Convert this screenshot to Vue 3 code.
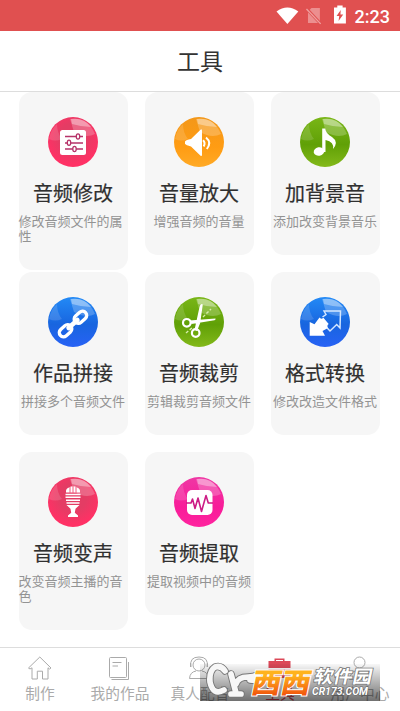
<script setup>
const tools = [
  { icon: 'sliders', tone: 'red', title: '音频修改', desc: '修改音频文件的属性' },
  { icon: 'speaker', tone: 'amber', title: '音量放大', desc: '增强音频的音量' },
  { icon: 'note', tone: 'green', title: '加背景音', desc: '添加改变背景音乐' },
  { icon: 'link', tone: 'blue', title: '作品拼接', desc: '拼接多个音频文件' },
  { icon: 'scissors', tone: 'green', title: '音频裁剪', desc: '剪辑裁剪音频文件' },
  { icon: 'convert', tone: 'blue', title: '格式转换', desc: '修改改造文件格式' },
  { icon: 'mic', tone: 'red', title: '音频变声', desc: '改变音频主播的音色' },
  { icon: 'wave', tone: 'pink', title: '音频提取', desc: '提取视频中的音频' }
]
const tabs = [
  { icon: 'home', label: '制作' },
  { icon: 'works', label: '我的作品' },
  { icon: 'voice', label: '真人配音' },
  { icon: 'tools', label: '工具', active: true },
  { icon: 'user', label: '用户中心' }
]
</script>

<template>
  <div class="screen">
    <div class="status">
      <svg class="wifi" viewBox="0 0 24 18"><path d="M0.5 4.2Q12-4 23.5 4.2L12 17.5Z" fill="#fff" /></svg>
      <svg class="sim" viewBox="0 0 16 18"><path d="M5.5 1H14V16H2V4.5Z" fill="#ec8f8f" /><path d="M0 1L15 17" stroke="#e05050" stroke-width="3" /><path d="M0.5 2L14.8 17" stroke="#efa09f" stroke-width="1.3" /></svg>
      <svg class="battery" viewBox="0 0 12 19"><path d="M0 2.5H3.3V0.3H8.7V2.5H12V18.5H0Z" fill="#fff" /><path d="M6.8 5L2.6 11H5.3L4.6 16L9.3 9.5H6.5Z" fill="#e05050" /></svg>
      <span class="time">2:23</span>
    </div>
    <header class="header">工具</header>
    <main class="grid">
      <section v-for="tool in tools" :key="tool.title" class="card">
        <div class="orb" :class="tool.tone">
          <svg viewBox="0 0 50 50" fill="none">
            <path d="M22 2Q40 0 47 17Q38 22 26 15Z" fill="#fff" opacity=".22" />
            <path d="M23 2Q36 0 43 10Q34 10 24 7Z" fill="#fff" opacity=".35" />
            <path d="M1 22Q3 12 9 7Q9 16 14 22Q7 25 1 22Z" fill="#fff" opacity=".14" />
            <g v-if="tool.icon === 'sliders'">
              <rect x="12" y="13" width="26" height="25" rx="2.5" fill="#fff" />
              <path d="M17 19.5H35M17 26H35M17 32H35" stroke="#b63369" stroke-width="1.5" />
              <g fill="#fff" stroke="#b63369" stroke-width="1.3"><ellipse cx="30" cy="19.5" rx="1.7" ry="2.6" /><ellipse cx="21" cy="25.8" rx="1.7" ry="2.6" /><ellipse cx="26.5" cy="32" rx="1.7" ry="2.6" /></g>
            </g>
            <g v-else-if="tool.icon === 'speaker'">
              <path d="M11 24.5Q12 22.7 17 22L26.5 12.7Q28 11.5 28 14V37.5Q28 40 26.3 38.5L17 29.5Q12 28.3 11 26.8Z" fill="#fff" />
              <path d="M29 23.3Q31.7 25.6 29.7 29.5M32 20.5Q38 25.5 32.8 32" stroke="#fff" stroke-width="2" />
            </g>
            <g v-else-if="tool.icon === 'note'">
              <ellipse cx="19" cy="34.5" rx="5.3" ry="4.2" fill="#fff" transform="rotate(-10 19 34.5)" />
              <path d="M22.2 11.5H25.2Q26 17 32 20Q39 25 33 32Q34.5 25 25.5 23V35H22.2Z" fill="#fff" />
            </g>
            <g v-else-if="tool.icon === 'link'" transform="rotate(-42 25 27)" stroke="#fff">
              <rect x="8" y="22.8" width="14" height="8.4" rx="4.2" stroke-width="3.3" />
              <rect x="28" y="22.8" width="14" height="8.4" rx="4.2" stroke-width="3.3" />
              <path d="M19 27H31" stroke-width="4.5" stroke-linecap="round" />
            </g>
            <g v-else-if="tool.icon === 'scissors'">
              <circle cx="12.8" cy="25.8" r="3.8" stroke="#fff" stroke-width="2.2" />
              <circle cx="21.7" cy="36" r="3.8" stroke="#fff" stroke-width="2.2" />
              <path d="M15.5 23.5L41.5 21.5Q42 22.7 40.5 23.3L17.5 27ZM20.5 33L25.5 10Q26.5 6 28.8 7.5L26.2 26L23 34Z" fill="#fff" />
              <path d="M12 36L19 30M29 20L37 12" stroke="#d7edaa" stroke-width="1.4" stroke-dasharray="3 1.8" />
            </g>
            <g v-else-if="tool.icon === 'convert'">
              <path d="M22.5 20L26 17.5L24 14H40.5L40 31L36.7 27.5L30 34L27.2 31" stroke="#d5e7ff" stroke-width="1.5" />
              <path d="M9.7 25L14.5 27.2L19.5 20.6Q21 22.8 23.4 20.7L28.7 27Q26.5 28.3 28 31L22.5 34L25 38.7H9.7Z" fill="#fff" />
            </g>
            <g v-else-if="tool.icon === 'mic'">
              <path d="M18 15.5Q17.5 11.5 21 10.5Q25 7.8 29 10.5Q32.5 11.5 32 15.5Z" fill="#fff" />
              <path d="M22 10V16M25 9V16M28 10V16" stroke="#f25b7f" stroke-width="1" />
              <path d="M17.5 17.4H32.5M17.5 20.3H32.5M18 23.2H32M18.5 26H31.5" stroke="#fff" stroke-width="1.5" />
              <path d="M18.5 28H31.5L27.5 31.7L26.8 35.8L30 38.5V40H20V38.5L23.2 35.8L22.5 31.7Z" fill="#fff" />
            </g>
            <g v-else>
              <rect x="13" y="13" width="25.5" height="25" rx="5" fill="#fff" />
              <path d="M12 26H17L18.5 22L21 31.5L24 21L27.5 34.5L32 18.5L34.3 26H39" stroke="#cc1c85" stroke-width="1.6" stroke-linejoin="round" />
            </g>
          </svg>
        </div>
        <h2>{{ tool.title }}</h2>
        <p>{{ tool.desc }}</p>
      </section>
    </main>
    <nav class="tabs">
      <div v-for="tab in tabs" :key="tab.label" class="tab" :class="{ active: tab.active }">
        <svg viewBox="0 0 28 28" fill="none" stroke="currentColor" stroke-width="1">
          <path v-if="tab.icon === 'home'" d="M2.5 14L13.8 3L25 14L23.5 15L22 13.8V25H16.5V17.2H11.3V25H6V13.8L4 15Z" />
          <g v-else-if="tab.icon === 'works'"><rect x="3.5" y="3.5" width="17" height="20" rx="1" /><path d="M6.5 8.5H15.5M6.5 12H12M22.5 8V25.5H5.5" /></g>
          <g v-else-if="tab.icon === 'voice'"><circle cx="13" cy="11" r="6" /><path d="M5 13Q3 3 13 3Q23 3 21 13M4.5 9V13M21.5 9V13M3.5 24.5Q4 18 10 17M22.5 24.5Q22 18 16 17M3.5 24.5H22.5" /></g>
          <g v-else-if="tab.icon === 'tools'" fill="currentColor" stroke="none"><path d="M8.5 7V4.5H18.5V7H24.5V14H2.5V7ZM10 7H17V6H10Z" fill-rule="evenodd" /><path d="M2.5 15.5H24.5V24H2.5Z" /></g>
          <g v-else><circle cx="13.5" cy="8.5" r="5.5" /><path d="M3.5 25.5Q4.5 16 14 16Q23.5 16 24.5 25.5Z" /></g>
        </svg>
        <span>{{ tab.label }}</span>
      </div>
    </nav>
    <svg class="brand" viewBox="0 0 190 45">
      <defs>
        <linearGradient id="shade" x2="0" y2="1"><stop stop-color="#000" stop-opacity=".03" /><stop offset=".5" stop-color="#000" stop-opacity=".3" /><stop offset="1" stop-color="#000" stop-opacity=".56" /></linearGradient>
        <linearGradient id="flame" x2="0" y2="1"><stop offset=".25" stop-color="#ffb31d" /><stop offset=".9" stop-color="#f04d0b" /></linearGradient>
      </defs>
      <rect x="5" y="4" width="180" height="37" fill="url(#shade)" />
      <g fill="none" stroke-linecap="round" stroke-linejoin="round">
        <path d="M30 11Q26 5 20 7Q14 11 15 22Q18 36 29 30M36 14L41 33M36 34H46M41 24Q43 17 53 17Q60 17 64 14Q63 21 55 20" stroke="#777" stroke-width="7.5" />
        <path d="M30 11Q26 5 20 7Q14 11 15 22Q18 36 29 30M36 14L41 33M36 34H46M41 24Q43 17 53 17Q60 17 64 14Q63 21 55 20" stroke="#f7f7f7" stroke-width="5.7" />
      </g>
      <g class="west" transform="translate(55 33) skewX(-12)"><text x="0" y="0" textLength="59" lengthAdjust="spacingAndGlyphs">西西</text></g>
      <g class="silver" transform="translate(118 23) skewX(-12)"><text x="0" y="0" textLength="58" lengthAdjust="spacingAndGlyphs">软件园</text></g>
      <text class="site" x="117" y="34.5" textLength="56" lengthAdjust="spacingAndGlyphs">CR173.COM</text>
    </svg>
  </div>
</template>

<style>
body { background: #fff; }
</style>

<style scoped>
* { box-sizing: border-box; }
.screen { position: relative; height: 711px; display: flex; flex-direction: column; overflow: hidden; background: #fff; font-family: Roboto, "Noto Sans CJK SC", sans-serif; }
.status { flex: 0 0 31px; background: #e05050; display: flex; align-items: center; padding: 1px 10px 0 276px; }
.wifi { width: 23px; height: 18px; }
.sim { width: 16px; height: 18px; margin-left: 7px; }
.battery { width: 12px; height: 19px; margin-left: 12px; margin-top: -3px; }
.time { color: #fff; font-size: 18px; line-height: 24px; margin: 2px 0 0 9px; font-weight: 500; }
.header { flex: 0 0 61px; min-height: 0; border-bottom: 1px solid #ddd; color: #333; font-size: 23px; line-height: 63px; text-align: center; }
.grid { flex: 1; min-height: 0; display: grid; grid-template-columns: repeat(3, 109px); grid-template-rows: repeat(3, 180px); column-gap: 17px; align-content: start; align-items: start; padding-left: 18.5px; }
.card { min-height: 163px; padding: 25px 0; border-radius: 13px; background: #f6f6f6; display: flex; flex-direction: column; align-items: center; }
.orb { width: 50px; height: 50px; border-radius: 50%; overflow: hidden; }
.orb svg { display: block; width: 50px; height: 50px; }
.red { background: radial-gradient(circle at 50% 40%, #e43c64 35%, #ff3165 70%); }
.amber { background: linear-gradient(#f39719, #ff9c13 60%, #ffaa26); }
.green { background: linear-gradient(#79b617, #60a006 55%, #83b91a); }
.blue { background: linear-gradient(#238af6, #1865df 55%, #2862f5); }
.pink { background: linear-gradient(#ef37a4, #f81c99 60%, #ff249f); }
h2 { margin: 12px 0 0; font-size: 20px; line-height: 30px; font-weight: 400; color: #303030; -webkit-text-stroke: 0.2px #303030; }
p { margin: 5px 0 1px; font-size: 13px; line-height: 15px; color: #939393; max-width: 109px; overflow-wrap: anywhere; }
.tabs { flex: 0 0 64px; border-top: 1px solid #ddd; display: grid; grid-template-columns: repeat(5, 80px); }
.tab { color: #aaa; display: flex; flex-direction: column; align-items: center; padding-top: 6px; font-size: 14.7px; line-height: 20px; }
.tab svg { width: 28px; height: 28px; }
.tab span { margin-top: 2px; white-space: nowrap; }
.active { color: #dc4858; }
.brand { position: absolute; width: 190px; height: 45px; left: 195px; top: 660px; }
.west text { font-size: 28px; font-weight: 900; fill: url(#flame); stroke: #fff; stroke-width: 2px; paint-order: stroke; }
.silver text { font-size: 18px; font-weight: 700; fill: #fff; stroke: #777; stroke-width: 1.5px; paint-order: stroke; }
.site { font-size: 10px; font-weight: 700; font-style: italic; fill: #fff; stroke: #666; stroke-width: 1px; paint-order: stroke; }
</style>
